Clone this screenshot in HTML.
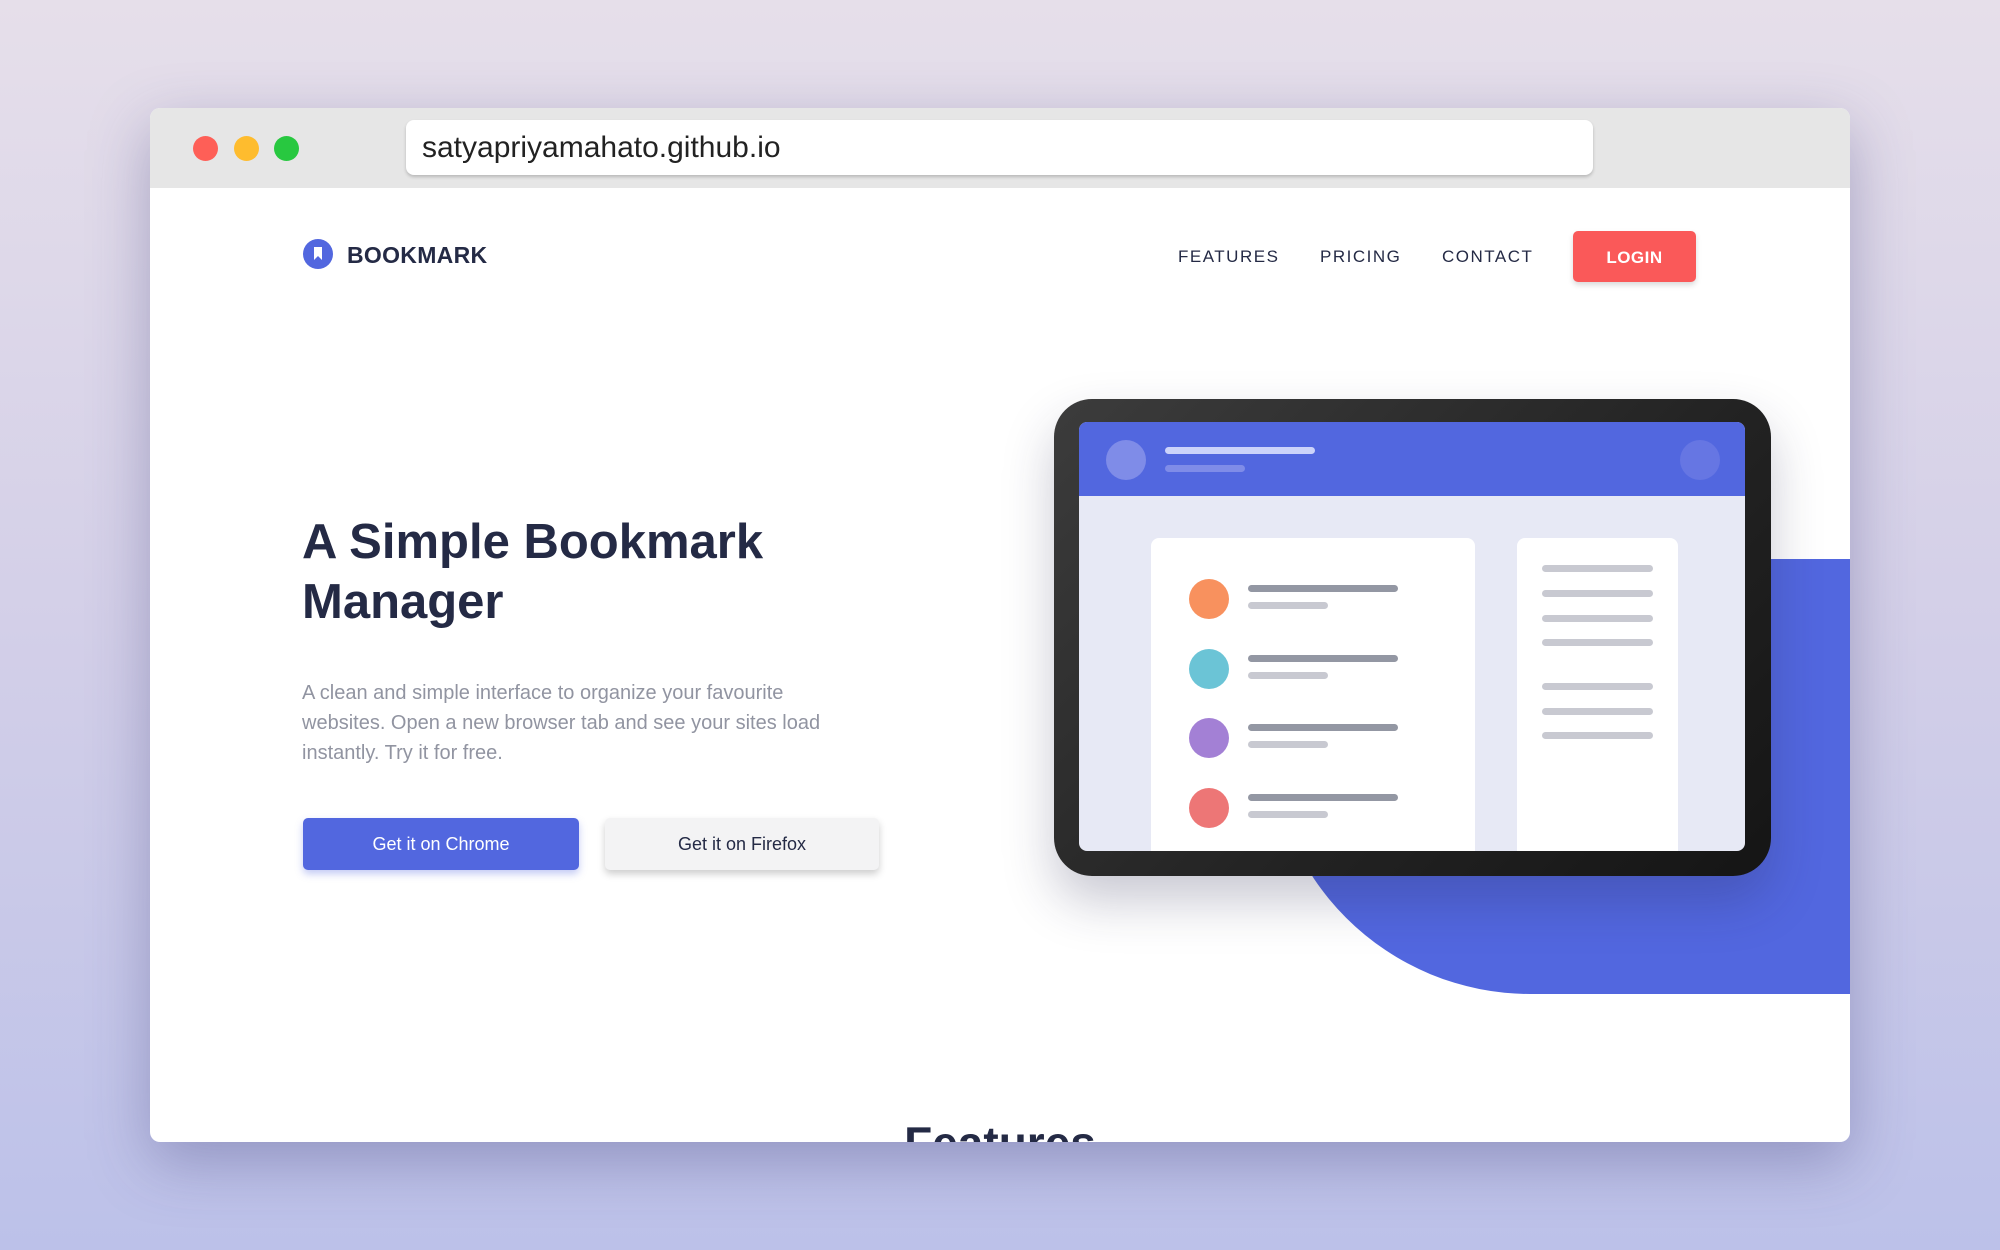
<!DOCTYPE html>
<html><head><meta charset="utf-8"><style>
*{margin:0;padding:0;box-sizing:border-box}
body{width:2000px;height:1250px;overflow:hidden;background:linear-gradient(180deg,#e6dfea 0%,#d3cfe8 50%,#bcc1e9 100%);font-family:"Liberation Sans",sans-serif;position:relative}
.win{position:absolute;left:150px;top:108px;width:1700px;height:1034px;border-radius:10px;overflow:hidden;background:#fff;box-shadow:0 20px 60px rgba(60,60,120,.35)}
.bar{position:absolute;left:0;top:0;width:100%;height:80px;background:#e6e6e6}
.dot{position:absolute;top:28px;width:25px;height:25px;border-radius:50%}
.url{position:absolute;left:256px;top:12px;width:1187px;height:55px;background:#fff;border-radius:8px;box-shadow:0 2px 3px rgba(0,0,0,.2);font-size:30px;color:#222;padding:13px 16px;line-height:30px}
.abs{position:absolute}
.nav{position:absolute;top:139px;font-size:17px;letter-spacing:1.5px;color:#242a45}
.card{position:absolute;background:#fff;border-radius:8px}
.ln{position:absolute;height:7px;border-radius:4px}
</style></head><body>
<div class="win">
<div class="bar">
<div class="dot" style="left:43px;background:#fe5f57"></div>
<div class="dot" style="left:84px;background:#febc2e"></div>
<div class="dot" style="left:124px;background:#28c840"></div>
<div class="url">satyapriyamahato.github.io</div>
</div>
<div class="abs" style="left:153px;top:131px;width:30px;height:30px;border-radius:50%;background:#5267df"></div>
<svg class="abs" style="left:161px;top:138px" width="14" height="16"><path d="M3 1h8v13l-4-4-4 4z" fill="#fff"/></svg>
<div class="abs" style="left:197px;top:134px;font-size:23px;font-weight:bold;color:#242a45;letter-spacing:.3px">BOOKMARK</div>
<div class="nav" style="left:1028px">FEATURES</div>
<div class="nav" style="left:1170px">PRICING</div>
<div class="nav" style="left:1292px">CONTACT</div>
<div class="abs" style="left:1423px;top:123px;width:123px;height:51px;background:#fa5959;border-radius:5px;color:#fff;font-size:17px;font-weight:bold;text-align:center;line-height:53px;letter-spacing:.5px;box-shadow:0 3px 6px rgba(0,0,0,.15)">LOGIN</div>
<div class="abs" style="left:152px;top:404px;font-size:49px;font-weight:bold;color:#242a45;line-height:60px">A Simple Bookmark<br>Manager</div>
<div class="abs" style="left:152px;top:570px;width:560px;font-size:20px;color:#9194a1;line-height:30px">A clean and simple interface to organize your favourite websites. Open a new browser tab and see your sites load instantly. Try it for free.</div>
<div class="abs" style="left:153px;top:710px;width:276px;height:52px;background:#5267df;border-radius:5px;color:#fff;font-size:18px;text-align:center;line-height:52px;box-shadow:0 4px 8px rgba(82,103,223,.35)">Get it on Chrome</div>
<div class="abs" style="left:455px;top:710px;width:274px;height:52px;background:#f3f3f4;border-radius:5px;color:#242a45;font-size:18px;text-align:center;line-height:52px;box-shadow:0 4px 8px rgba(0,0,0,.2)">Get it on Firefox</div>
<div class="abs" style="left:1120px;top:451px;width:580px;height:435px;background:#5267df;border-bottom-left-radius:260px"></div>
<div class="abs" style="left:904px;top:291px;width:717px;height:477px;border-radius:38px;background:linear-gradient(135deg,#3c3c3c,#222 60%,#151515);box-shadow:0 25px 50px rgba(40,40,80,.25)">
 <div class="abs" style="left:25px;top:23px;width:666px;height:429px;border-radius:8px;overflow:hidden;background:#e7e9f5">
  <div class="abs" style="left:0;top:0;width:100%;height:74px;background:#5267df"></div>
  <div class="abs" style="left:27px;top:18px;width:40px;height:40px;border-radius:50%;background:#7f8ce8"></div>
  <div class="abs" style="left:601px;top:18px;width:40px;height:40px;border-radius:50%;background:#6676e3"></div>
  <div class="ln" style="left:86px;top:25px;width:150px;background:#ccd3fa"></div>
  <div class="ln" style="left:86px;top:43px;width:80px;background:#7f8ce8"></div>
  <div class="card" style="left:72px;top:116px;width:324px;height:340px">
   <div class="abs" style="left:38px;top:41px;width:40px;height:40px;border-radius:50%;background:#f8915e"></div>
   <div class="abs" style="left:38px;top:111px;width:40px;height:40px;border-radius:50%;background:#6bc4d6"></div>
   <div class="abs" style="left:38px;top:180px;width:40px;height:40px;border-radius:50%;background:#a380d5"></div>
   <div class="abs" style="left:38px;top:250px;width:40px;height:40px;border-radius:50%;background:#ed7676"></div>
   <div class="ln" style="left:97px;top:47px;width:150px;background:#9397a3"></div><div class="ln" style="left:97px;top:64px;width:80px;background:#c8c9d1"></div>
   <div class="ln" style="left:97px;top:117px;width:150px;background:#9397a3"></div><div class="ln" style="left:97px;top:134px;width:80px;background:#c8c9d1"></div>
   <div class="ln" style="left:97px;top:186px;width:150px;background:#9397a3"></div><div class="ln" style="left:97px;top:203px;width:80px;background:#c8c9d1"></div>
   <div class="ln" style="left:97px;top:256px;width:150px;background:#9397a3"></div><div class="ln" style="left:97px;top:273px;width:80px;background:#c8c9d1"></div>
  </div>
  <div class="card" style="left:438px;top:116px;width:161px;height:340px">
   <div class="ln" style="left:25px;top:27px;width:111px;background:#c8c9d1"></div>
   <div class="ln" style="left:25px;top:52px;width:111px;background:#c8c9d1"></div>
   <div class="ln" style="left:25px;top:77px;width:111px;background:#c8c9d1"></div>
   <div class="ln" style="left:25px;top:101px;width:111px;background:#c8c9d1"></div>
   <div class="ln" style="left:25px;top:145px;width:111px;background:#c8c9d1"></div>
   <div class="ln" style="left:25px;top:170px;width:111px;background:#c8c9d1"></div>
   <div class="ln" style="left:25px;top:194px;width:111px;background:#c8c9d1"></div>
  </div>
 </div>
</div>
<div class="abs" style="left:0;width:1700px;top:1008px;text-align:center;font-size:46px;font-weight:bold;color:#242a45">Features</div>
</div>
</body></html>
